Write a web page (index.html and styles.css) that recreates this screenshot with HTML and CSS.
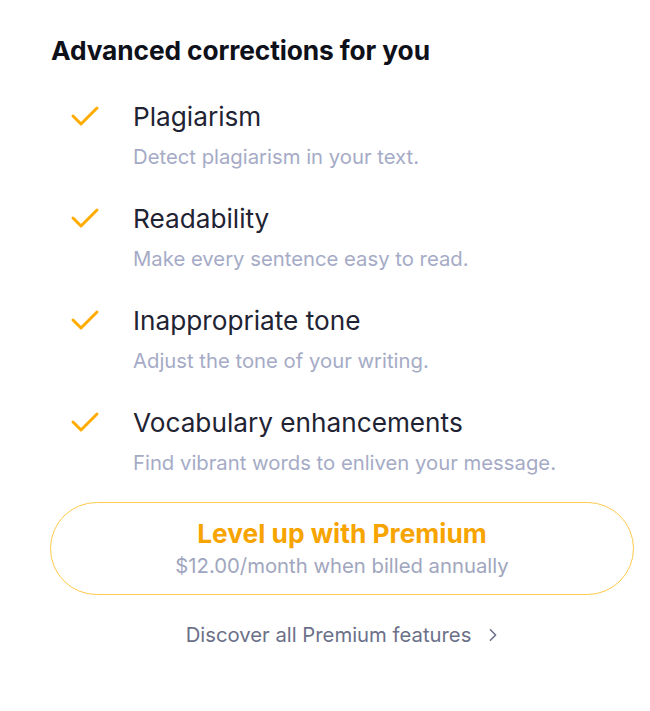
FILE: index.html
```html
<!DOCTYPE html>
<html>
<head>
<link rel="stylesheet" href="styles.css">
</head>
<body>
<div class="panel">
  <h2 class="title">Advanced corrections for you</h2>
  <ul class="features">
    <li class="feature">
      <svg class="check" viewBox="0 0 30 22"><path d="M3 11 L11 19 L27 3"/></svg>
      <div>
        <div class="name">Plagiarism</div>
        <div class="desc">Detect plagiarism in your text.</div>
      </div>
    </li>
    <li class="feature">
      <svg class="check" viewBox="0 0 30 22"><path d="M3 11 L11 19 L27 3"/></svg>
      <div>
        <div class="name">Readability</div>
        <div class="desc">Make every sentence easy to read.</div>
      </div>
    </li>
    <li class="feature">
      <svg class="check" viewBox="0 0 30 22"><path d="M3 11 L11 19 L27 3"/></svg>
      <div>
        <div class="name">Inappropriate tone</div>
        <div class="desc">Adjust the tone of your writing.</div>
      </div>
    </li>
    <li class="feature">
      <svg class="check" viewBox="0 0 30 22"><path d="M3 11 L11 19 L27 3"/></svg>
      <div>
        <div class="name">Vocabulary enhancements</div>
        <div class="desc">Find vibrant words to enliven your message.</div>
      </div>
    </li>
  </ul>
  <a class="upgrade" href="#">
    <span class="upgrade-title">Level up with Premium</span>
    <span class="upgrade-price">$12.00/month when billed annually</span>
  </a>
  <a class="discover" href="#">Discover all Premium features
    <svg class="chev" viewBox="0 0 10 16"><path d="M2 2 L8 8 L2 14"/></svg>
  </a>
</div>
</body>
</html>
```

FILE: styles.css
```css
* {
  margin: 0;
  padding: 0;
  box-sizing: border-box;
}
body {
  background: #fff;
  font-family: Inter, "Noto Sans", sans-serif;
  color: #1f2333;
}
.panel {
  padding: 36px 16px 0 50px;
  width: 650px;
}
.title {
  font-size: 26.3px;
  font-weight: 700;
  color: #0e101a;
  padding-left: 1px;
  line-height: 30px;
  letter-spacing: -0.1px;
}
.features {
  list-style: none;
  margin-top: 35px;
  padding-left: 20px;
}
.feature {
  display: flex;
  gap: 33px;
  height: 102px;
}
.check {
  width: 30px;
  height: 22px;
  margin-top: 4px;
  flex: none;
}
.check path {
  fill: none;
  stroke: #ffab00;
  stroke-width: 3;
  stroke-linecap: round;
  stroke-linejoin: round;
}
.name {
  font-size: 26.2px;
  line-height: 32px;
  color: #1f2333;
}
.desc {
  font-size: 20.3px;
  line-height: 26px;
  margin-top: 11px;
  color: #a5abc6;
}
.upgrade {
  display: flex;
  flex-direction: column;
  align-items: center;
  justify-content: center;
  gap: 4px;
  width: 584px;
  height: 93px;
  border: 1.5px solid #ffc94a;
  border-radius: 47px;
  text-decoration: none;
  margin-top: -7px;
}
.upgrade-title {
  font-size: 26.3px;
  font-weight: 700;
  color: #f7a400;
  line-height: 30px;
}
.upgrade-price {
  font-size: 20.3px;
  color: #a0a6be;
  line-height: 26px;
}
.discover {
  display: flex;
  align-items: center;
  justify-content: center;
  gap: 17px;
  width: 584px;
  margin-top: 28px;
  font-size: 20.3px;
  line-height: 24px;
  color: #6b7089;
  text-decoration: none;
}
.chev {
  width: 10px;
  height: 14px;
}
.chev path {
  fill: none;
  stroke: #6b7089;
  stroke-width: 1.8;
  stroke-linecap: round;
  stroke-linejoin: round;
}
```
